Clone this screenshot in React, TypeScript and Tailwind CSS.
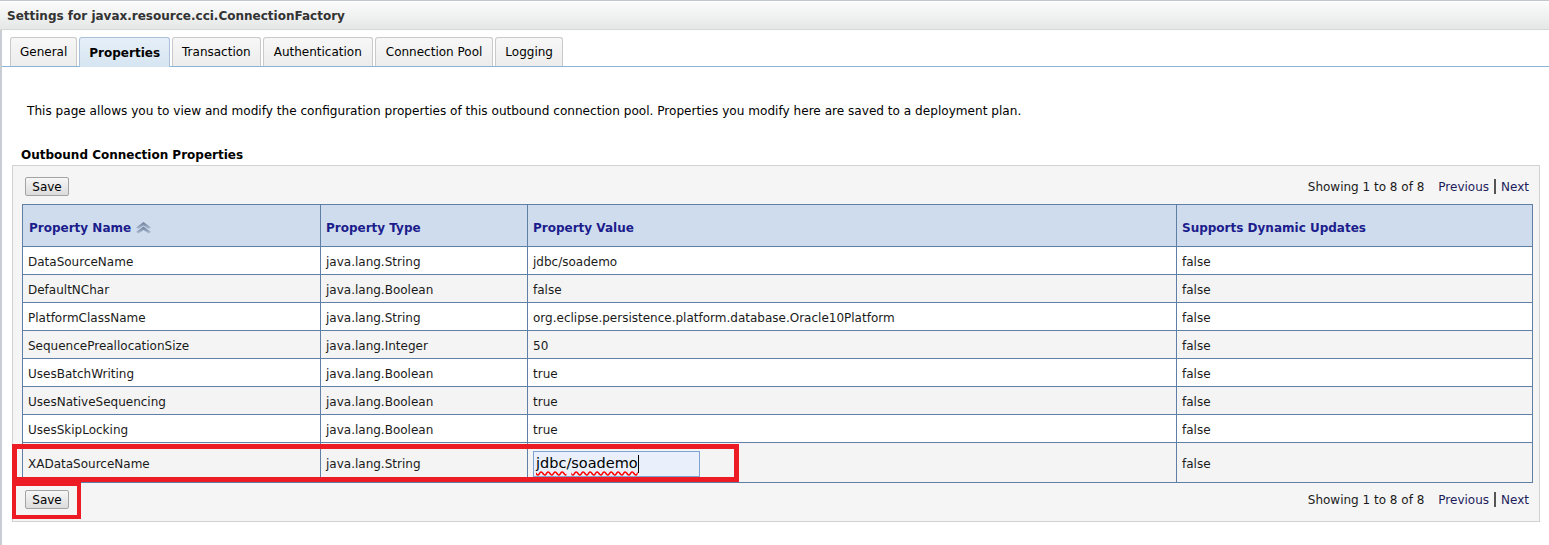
import React from 'react';

type Row = { name: string; type: string; value: string; dynamic: string };

const rows: Row[] = [
  { name: 'DataSourceName', type: 'java.lang.String', value: 'jdbc/soademo', dynamic: 'false' },
  { name: 'DefaultNChar', type: 'java.lang.Boolean', value: 'false', dynamic: 'false' },
  { name: 'PlatformClassName', type: 'java.lang.String', value: 'org.eclipse.persistence.platform.database.Oracle10Platform', dynamic: 'false' },
  { name: 'SequencePreallocationSize', type: 'java.lang.Integer', value: '50', dynamic: 'false' },
  { name: 'UsesBatchWriting', type: 'java.lang.Boolean', value: 'true', dynamic: 'false' },
  { name: 'UsesNativeSequencing', type: 'java.lang.Boolean', value: 'true', dynamic: 'false' },
  { name: 'UsesSkipLocking', type: 'java.lang.Boolean', value: 'true', dynamic: 'false' },
];

const tabs = ['General', 'Properties', 'Transaction', 'Authentication', 'Connection Pool', 'Logging'];

const SaveButton = () => (
  <button className="h-[19px] w-[44px] border border-[#a3a3a3] bg-gradient-to-b from-[#f7f7f7] to-[#dcdcdc] text-[12px] leading-none text-black rounded-[2px]">
    Save
  </button>
);

const Pager = () => (
  <div className="text-[12px] text-[#1a1a1a] flex items-center">
    <span>Showing 1 to 8 of 8</span>
    <span className="ml-[14px] text-[#1c1c5c]">Previous</span>
    <span className="mx-[5px] inline-block w-[2px] h-[15px] bg-[#555]" />
    <span className="text-[#1c1c5c]">Next</span>
  </div>
);

const SortIcon = () => (
  <svg width="17" height="13" viewBox="0 0 17 13" className="ml-[4px]">
    <defs>
      <linearGradient id="sg" x1="0" y1="0" x2="0" y2="1">
        <stop offset="0" stopColor="#667a98" />
        <stop offset="1" stopColor="#b3c0d5" />
      </linearGradient>
    </defs>
    <path d="M1 6.5 L8.5 1 L16 6.5 L13.5 8 L8.5 4.5 L3.5 8 Z" fill="url(#sg)" />
    <path d="M1 11 L8.5 5.5 L16 11 L13.5 12.5 L8.5 9 L3.5 12.5 Z" fill="url(#sg)" />
  </svg>
);

export default function App() {
  const cell = 'border border-[#5f7fa7] pl-[5px] pt-[2px] text-left align-middle';
  return (
    <div className="relative w-full h-[545px] overflow-hidden bg-white text-[12px] text-[#1a1a1a]" style={{ fontFamily: '"DejaVu Sans", Verdana, sans-serif' }}>
      <div className="h-[1px] bg-[#c2c6cd]" />
      <div className="h-[1px] bg-white" />
      <div className="h-[28px] border-b border-[#d6d8d8] bg-gradient-to-b from-[#fbfbfb] to-[#e5e7e7] pl-[7px] flex items-center font-bold text-[#333]">
        Settings for javax.resource.cci.ConnectionFactory
      </div>

      <div className="border-l-2 border-[#c9cdd3] h-full">
        <div className="pt-[7px] pl-[8px] flex items-end gap-[2px] border-b border-[#8db4d6]">
          {tabs.map((t) =>
            t === 'Properties' ? (
              <div key={t} className="h-[30px] px-[9px] flex items-center rounded-t-[3px] border border-b-0 border-[#a9c2da] bg-gradient-to-b from-[#e6eff8] to-[#d6e5f2] font-bold text-black -mb-[1px]">
                {t}
              </div>
            ) : (
              <div
                key={t}
                className={
                  'h-[29px] flex items-center rounded-t-[3px] border border-b-0 border-[#c9c9c9] bg-gradient-to-b from-[#f7f7f7] to-[#ececec] text-black ' +
                  (t === 'Authentication' || t === 'Connection Pool' ? 'px-[10px]' : 'px-[9px]')
                }
              >
                {t}
              </div>
            )
          )}
        </div>

        <p className="mt-[36px] ml-[25px] leading-[16px] text-black text-[12.1px]">
          This page allows you to view and modify the configuration properties of this outbound connection pool. Properties you modify here are saved to a deployment plan.
        </p>

        <h2 className="mt-[28px] ml-[19px] leading-[16px] font-bold text-black">Outbound Connection Properties</h2>

        <div className="mt-[2px] ml-[10px] w-[1528px] border border-[#d2d2d2] bg-[#f5f5f5] pl-[9px] pr-[7px] pt-[11px] pb-[12px]">
          <div className="flex items-center justify-between pl-[3px] pr-[3px]">
            <SaveButton />
            <Pager />
          </div>

          <table className="mt-[8px] w-[1510px] border-collapse table-fixed">
            <colgroup>
              <col className="w-[298px]" />
              <col className="w-[207px]" />
              <col className="w-[649px]" />
              <col className="w-[356px]" />
            </colgroup>
            <thead>
              <tr className="h-[42px] bg-[#cfdcee] text-[#1c1c8c] font-bold">
                <th className={cell + ' pl-[6px] pt-[4px]'}>
                  <span className="inline-flex items-center">
                    Property Name
                    <SortIcon />
                  </span>
                </th>
                <th className={cell + ' pt-[4px]'}>Property Type</th>
                <th className={cell + ' pt-[4px]'}>Property Value</th>
                <th className={cell + ' pt-[4px]'}>Supports Dynamic Updates</th>
              </tr>
            </thead>
            <tbody>
              {rows.map((r, i) => (
                <tr key={r.name} className={'h-[28px] ' + (i % 2 === 0 ? 'bg-white' : 'bg-[#f4f4f4]')}>
                  <td className={cell}>{r.name}</td>
                  <td className={cell}>{r.type}</td>
                  <td className={cell}>{r.value}</td>
                  <td className={cell}>{r.dynamic}</td>
                </tr>
              ))}
              <tr className="h-[40px] bg-[#f4f4f4]">
                <td className={cell}>XADataSourceName</td>
                <td className={cell}>java.lang.String</td>
                <td className={cell}>
                  <div className="w-[167px] h-[26px] border border-[#7ea2d3] bg-[#e9f0fb] flex items-center pl-[2px] text-[14.5px] text-black">
                    <span className="underline decoration-wavy decoration-[#ff0000] underline-offset-[3px]">jdbc</span>
                    <span>/</span>
                    <span className="underline decoration-wavy decoration-[#ff0000] underline-offset-[3px]">soademo</span>
                    <span className="inline-block w-[1px] h-[18px] bg-black" />
                  </div>
                </td>
                <td className={cell}>false</td>
              </tr>
            </tbody>
          </table>

          <div className="mt-[7px] flex items-center justify-between pl-[3px] pr-[3px]">
            <SaveButton />
            <Pager />
          </div>
        </div>
      </div>

      {/* red annotation boxes */}
      <div className="absolute left-[12px] top-[444px] w-[727px] h-[38px] border-[5px] border-[#ed1c24]" />
      <div className="absolute left-[12px] top-[482px] w-[69px] h-[37px] border-[4px] border-[#ed1c24]" />
    </div>
  );
}
